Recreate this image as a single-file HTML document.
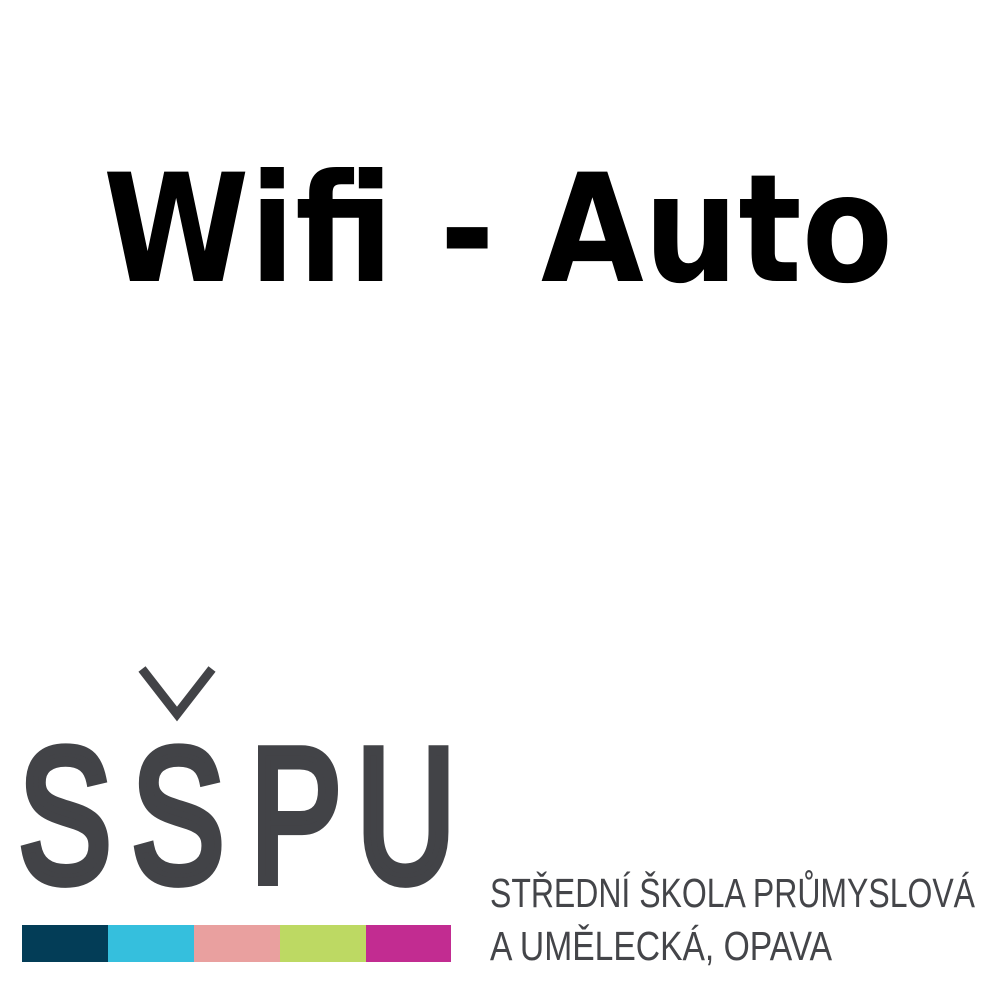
<!DOCTYPE html>
<html><head><meta charset="utf-8"><style>
html,body{margin:0;padding:0;background:#fff;width:1000px;height:1000px;overflow:hidden}
</style></head><body>
<svg width="1000" height="1000" viewBox="0 0 1000 1000" xmlns="http://www.w3.org/2000/svg">
<rect width="1000" height="1000" fill="#fff"/>
<text x="103" y="281" font-family="DejaVu Sans, sans-serif" font-weight="bold" font-size="150" fill="#000" textLength="790" lengthAdjust="spacingAndGlyphs">Wifi - Auto</text>
<polyline points="142,669 177,714 212,669" fill="none" stroke="#424347" stroke-width="9"/>
<g font-family="Liberation Sans, sans-serif" font-size="190" fill="#424347" stroke="#424347" stroke-width="10" text-anchor="middle">
<text transform="translate(65,881) scale(0.73,1)">S</text>
<text transform="translate(178,881) scale(0.73,1)">S</text>
<text transform="translate(296,881) scale(0.72,1)">P</text>
<text transform="translate(406,881) scale(0.72,1)">U</text>
</g>
<rect x="22" y="925" width="86" height="37" fill="#033d57"/>
<rect x="108" y="925" width="86" height="37" fill="#35bfdd"/>
<rect x="194" y="925" width="86" height="37" fill="#e9a09f"/>
<rect x="280" y="925" width="86" height="37" fill="#bdd963"/>
<rect x="366" y="925" width="85" height="37" fill="#c22c91"/>
<text x="490" y="907" font-family="Liberation Sans, sans-serif" font-size="41" fill="#444549" textLength="485" lengthAdjust="spacingAndGlyphs">STŘEDNÍ ŠKOLA PRŮMYSLOVÁ</text>
<text x="490" y="960" font-family="Liberation Sans, sans-serif" font-size="41" fill="#444549" textLength="342" lengthAdjust="spacingAndGlyphs">A UMĚLECKÁ, OPAVA</text>
</svg>
</body></html>
